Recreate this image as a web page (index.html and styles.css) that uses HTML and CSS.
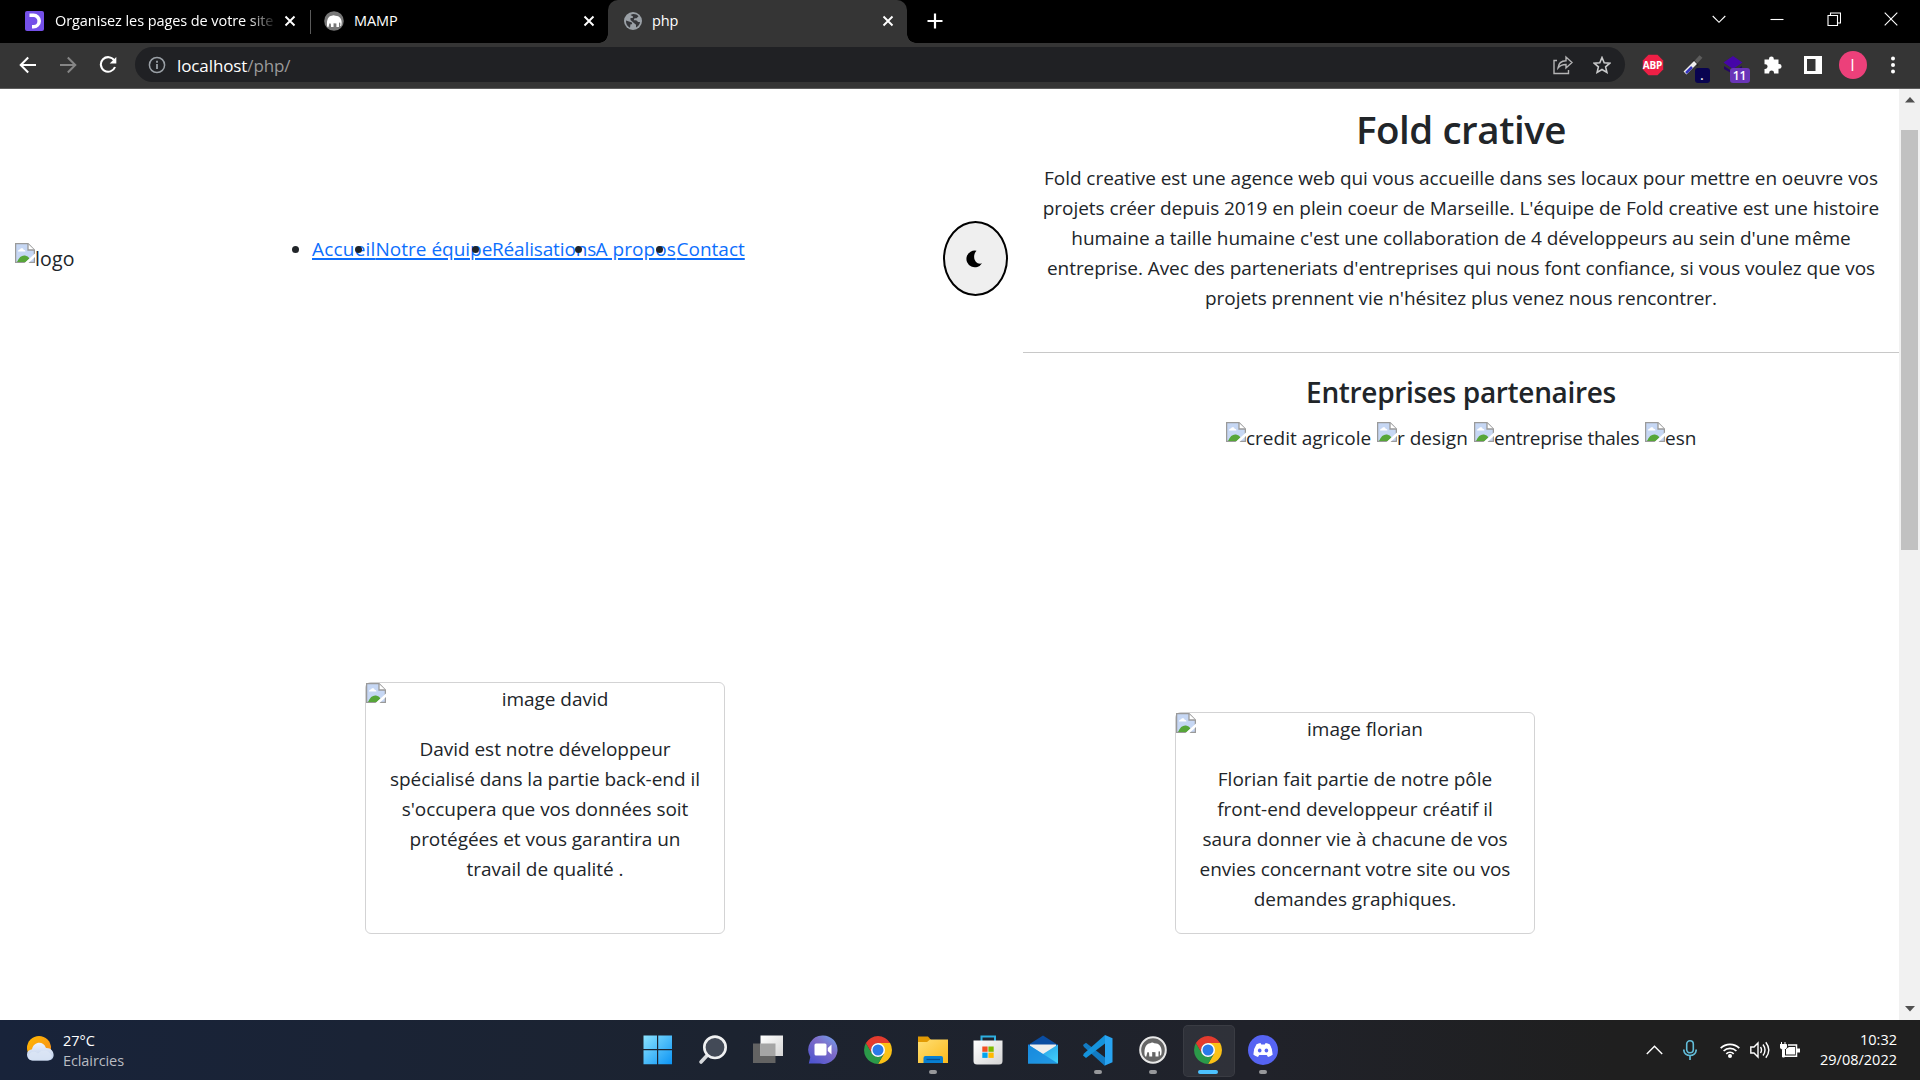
FILE: index.html
```html
<!DOCTYPE html>
<html lang="fr">
<head>
<meta charset="utf-8">
<title>php</title>
<link rel="stylesheet" href="styles.css">
</head>
<body>
<svg class="defs" width="0" height="0">
  <defs>
    <linearGradient id="win" x1="0" y1="0" x2="1" y2="1"><stop offset="0" stop-color="#8be3ff"/><stop offset="1" stop-color="#0c94f4"/></linearGradient>
    <linearGradient id="grey" x1="0" y1="0" x2="1" y2="1"><stop offset="0" stop-color="#fff"/><stop offset="1" stop-color="#d4d4d4"/></linearGradient>
    <linearGradient id="chatg" x1="1" y1="0" x2="0.2" y2="1"><stop offset="0" stop-color="#6ea6f0"/><stop offset=".45" stop-color="#7f6cc8"/><stop offset="1" stop-color="#4f55cf"/></linearGradient>
    <linearGradient id="fold" x1="0" y1="0" x2="1" y2="1"><stop offset="0" stop-color="#ffdf74"/><stop offset="1" stop-color="#fbba1c"/></linearGradient>
    <linearGradient id="mailg" x1="0" y1="0" x2="1" y2="1"><stop offset="0" stop-color="#1a8fe0"/><stop offset="1" stop-color="#45d3fb"/></linearGradient>
    <linearGradient id="sun" x1="0" y1="0" x2="1" y2="1"><stop offset="0" stop-color="#ffb900"/><stop offset="1" stop-color="#f78a1c"/></linearGradient>
    <linearGradient id="cloud" x1="0" y1="0" x2="0" y2="1"><stop offset="0" stop-color="#eef3fb"/><stop offset="1" stop-color="#b8cbea"/></linearGradient>
    <symbol id="broken" viewBox="0 0 20 20">
      <path d="M.6 .6H13L19.400 7V19.400H.6z" fill="#c6d7f4" stroke="#9a9a9a" stroke-width="1.300"/>
      <path d="M3 8.500c0-1.500 1.200-2 2-2 .5-1.700 3.200-1.700 3.600.2 1.300 0 1.800.8 1.800 1.800z" fill="#fff"/>
      <path d="M2 19c2-5 5-7 8-6.500 2 .3 3.500 1.500 4.500 3L11 19z" fill="#57a639"/>
      <path d="M13 1V7H19.400" fill="#fff" stroke="#9a9a9a" stroke-width="1.300"/>
      <path d="M20 10.500V14L13.500 20H9.500z" fill="#fff"/>
    </symbol>
    <symbol id="chrome" viewBox="0 0 28 28">
      <path d="M14 7H26.100A14 14 0 0 1 14 28L20.100 17.500z" fill="#fbc116"/>
      <path d="M1.900 7L8 17.500A7 7 0 0 0 20.100 17.500L14 28A14 14 0 0 1 1.900 7z" fill="#2b9a49"/>
      <path d="M1.900 7A14 14 0 0 1 26.100 7H14A7 7 0 0 0 8 17.500z" fill="#e33b2e"/>
      <circle cx="14" cy="14" r="7" fill="#fff"/><circle cx="14" cy="14" r="5.500" fill="#2a7ae9"/>
    </symbol>
    <symbol id="elephant" viewBox="0 0 18 16">
      <path d="M.5 12C.2 6 2 1.500 6.200 1.200c1-.8 3-.8 4 0C15 1 17.600 4.500 17.600 9c0 2-.2 3.500-.8 4.500l-1-.3c.4-1.600.3-3 0-4l-1.300.3V14.500h-3V10.200L8.200 10v4.500H5.300L5 10.500 3.600 10c-.8 1.500-.8 3.500-1.500 4.700C1 14.700.6 13.300.5 12z"/>
    </symbol>
    <symbol id="x" viewBox="0 0 12 12"><path d="M1.500 1.500l9 9M10.500 1.500l-9 9" fill="none" stroke="#fff" stroke-width="1.900"/></symbol>
  </defs>
</svg>

<header class="tabs">
  <div class="tab tab-first">
    <svg width="20" height="20" viewBox="0 0 20 20"><rect x="2" width="17" height="20" rx="2" fill="#7450e8"/><rect width="17" height="20" rx="2" fill="#7450e8"/><path d="M4.500 4.300H8.500a5.700 5.700 0 0 1 0 11.400H7" fill="none" stroke="#fff" stroke-width="3.600"/></svg>
    <span class="tab-title tab-fade">Organisez les pages de votre site</span>
    <svg class="close" width="12" height="12"><use href="#x"/></svg>
  </div>
  <div class="tab tab-mamp">
    <svg width="20" height="20" viewBox="0 0 20 20"><circle cx="10" cy="10" r="9.800" fill="#777"/><use href="#elephant" x="2.500" y="3.500" width="15.500" height="14" fill="#fff"/></svg>
    <span class="tab-title">MAMP</span>
    <svg class="close" width="12" height="12"><use href="#x"/></svg>
  </div>
  <div class="tab tab-active">
    <svg width="18" height="18" viewBox="0 0 18 18"><circle cx="9" cy="9" r="9" fill="#9aa0a6"/><path d="M2 8.500l4.500 1.500c1 0 2 .8 1.500 2.200H6.500L6 15.800C3.500 14.500 1.700 12 2 8.500zM6.500 3C9 1.300 12.500 2 14.500 4.200l-2 2H10.500l-.8 2h1.800c1.500 0 1.800.9 2.600 1.900H16c-.2 2.500-1.800 4.500-4 5.400v-2.800L9.300 10.500 6.500 8V6h1.500c.8 0 1-.5 1-1.500z" fill="#35363a"/></svg>
    <span class="tab-title">php</span>
    <svg class="close" width="12" height="12"><use href="#x"/></svg>
  </div>
  <svg class="plus" width="16" height="16" viewBox="0 0 16 16"><path d="M8 .5v15M.5 8h15" stroke="#fff" stroke-width="2.200"/></svg>
  <div class="window-controls">
    <svg width="14" height="14" viewBox="0 0 14 14"><path d="M.7 4L7 10.300 13.300 4"/></svg>
    <svg width="14" height="14" viewBox="0 0 14 14"><path d="M.5 7.500h13"/></svg>
    <svg width="14" height="14" viewBox="0 0 14 14"><path d="M1 3.500H10.500V13.500H1zM3.500 3V1H13.500V11H11"/></svg>
    <svg width="14" height="14" viewBox="0 0 14 14"><path d="M.7 .7l12.600 12.600M13.300 .7L.7 13.300"/></svg>
  </div>
</header>

<div class="toolbar">
  <div class="nav-buttons">
    <svg width="18" height="18" viewBox="0 0 18 18"><path d="M17 9H2M9.200 1.500L1.700 9l7.500 7.500" fill="none" stroke="#fff" stroke-width="2"/></svg>
    <svg width="18" height="18" viewBox="0 0 18 18"><path d="M1 9h15M8.800 1.500L16.300 9l-7.500 7.500" fill="none" stroke="#868686" stroke-width="2"/></svg>
    <svg width="18" height="18" viewBox="0 0 18 18"><path d="M15.300 4.500A7.300 7.300 0 1 0 16 11" fill="none" stroke="#fff" stroke-width="2.100"/><path d="M17.300 1V7.600H10.700z" fill="#fff"/></svg>
  </div>
  <div class="omnibox">
    <svg width="18" height="18" viewBox="0 0 18 18"><circle cx="9" cy="9" r="7.600" fill="none" stroke="#9aa0a6" stroke-width="1.500"/><path d="M9 8v5M9 4.800v1.900" stroke="#9aa0a6" stroke-width="1.800"/></svg>
    <span class="url">localhost<i>/php/</i></span>
    <svg class="share" width="20" height="20" viewBox="0 0 20 20"><path d="M4 5.500H1V18.500H15.500V15M5 13c.5-5 3.500-7.300 8-7.300V2L19 7.500 13 13V9.500C9.500 9.500 7 10.500 5 13z" fill="none" stroke="#b4b4b5" stroke-width="1.400"/></svg>
    <svg width="18" height="18" viewBox="0 0 18 18"><path d="M9 1.500l2.200 5.200 5.600.5-4.200 3.700 1.300 5.500L9 13.500l-4.900 2.900 1.300-5.500L1.200 7.200l5.600-.5z" fill="none" stroke="#c9cacb" stroke-width="1.600"/></svg>
  </div>
  <div class="extensions">
    <div><svg width="22" height="22" viewBox="0 0 22 22"><path d="M6.500 .8h9l5.700 5.700v9l-5.700 5.700h-9L.8 15.500v-9z" fill="#ee1f45"/></svg><b class="abp">ABP</b></div>
    <div><svg width="20" height="20" viewBox="0 0 20 20"><path d="M12 8L18 1.500" stroke="#5c5c5c" stroke-width="4"/><path d="M10 5.500l5 5" stroke="#222" stroke-width="2"/><path d="M2 18L12.500 7.500" stroke="#eee" stroke-width="4"/><path d="M3 18L9 12" stroke="#3434bd" stroke-width="2.500"/></svg><span class="badge badge-dot">.</span></div>
    <div><svg width="20" height="20" viewBox="0 0 20 20"><path d="M1 11l9 6 9-6v3l-9 5-9-5z" fill="#250467"/><path d="M10 1l9.500 6.500L10 14 .5 7.500z" fill="#4505a8"/></svg><span class="badge badge-count">11</span></div>
    <div><svg width="20" height="20" viewBox="0 0 20 20"><path d="M1.500 4.500H6V3.800a2.400 2.400 0 0 1 4.800 0v.7h4.700V9h.7a2.400 2.400 0 0 1 0 4.800h-.7v4.700H11v-.7a2.400 2.400 0 0 0-4.800 0v.7H1.500V14h.7a2.400 2.400 0 0 0 0-4.800h-.7z" fill="#fff"/></svg></div>
    <div><svg width="18" height="18" viewBox="0 0 18 18"><path d="M0 0h18v18H0zM3 3v12h8.500V3z" fill="#fff" fill-rule="evenodd"/></svg></div>
    <div><span class="avatar">I</span></div>
    <div><svg width="4" height="18" viewBox="0 0 4 18"><circle cx="2" cy="2.500" r="2" fill="#fff"/><circle cx="2" cy="9" r="2" fill="#fff"/><circle cx="2" cy="15.500" r="2" fill="#fff"/></svg></div>
  </div>
</div>

<div class="viewport">
  <div class="page">
    <div class="top">
      <div class="left">
        <div class="logo"><svg width="20" height="20"><use href="#broken"/></svg><span>logo</span></div>
        <ul class="menu">
          <li><a>Accueil</a></li><li><a>Notre équipe</a></li><li><a>Réalisations</a></li><li><a>A propos</a></li><li><a>Contact</a></li>
        </ul>
        <div class="moon"><svg width="18" height="18" viewBox="0 0 18 18"><path d="M11.500 .7A8.400 8.400 0 1 0 17 13.300C11 15.500 6 7 11.500 .7z"/></svg></div>
      </div>
      <div class="right">
        <h1>Fold crative</h1>
        <p class="intro">
          <span>Fold creative est une agence web qui vous accueille dans ses locaux pour mettre en oeuvre vos</span>
          <span>projets créer depuis 2019 en plein coeur de Marseille. L'équipe de Fold creative est une histoire</span>
          <span>humaine a taille humaine c'est une collaboration de 4 développeurs au sein d'une même</span>
          <span>entreprise. Avec des parteneriats d'entreprises qui nous font confiance, si vous voulez que vos</span>
          <span>projets prennent vie n'hésitez plus venez nous rencontrer.</span>
        </p>
        <h2>Entreprises partenaires</h2>
        <div class="partners">
          <div class="p1"><svg width="20" height="20"><use href="#broken"/></svg><span>credit agricole</span></div>
          <div class="p2"><svg width="20" height="20"><use href="#broken"/></svg><span>r design</span></div>
          <div class="p3"><svg width="20" height="20"><use href="#broken"/></svg><span>entreprise thales</span></div>
          <div class="p4"><svg width="20" height="20"><use href="#broken"/></svg><span>esn</span></div>
        </div>
      </div>
    </div>
    <div class="team">
      <article class="card card-david">
        <div class="alt"><svg width="20" height="20"><use href="#broken"/></svg><span>image david</span></div>
        <p><span>David est notre développeur</span><span>spécialisé dans la partie back-end il</span><span>s'occupera que vos données soit</span><span>protégées et vous garantira un</span><span>travail de qualité .</span></p>
      </article>
      <article class="card card-florian">
        <div class="alt"><svg width="20" height="20"><use href="#broken"/></svg><span>image florian</span></div>
        <p><span>Florian fait partie de notre pôle</span><span>front-end developpeur créatif il</span><span>saura donner vie à chacune de vos</span><span>envies concernant votre site ou vos</span><span>demandes graphiques.</span></p>
      </article>
    </div>
  </div>
  <div class="scrollbar">
    <svg width="10" height="6" viewBox="0 0 10 6"><path d="M5 0l5 5.500H0z" fill="#505050"/></svg>
    <div class="thumb"></div>
    <svg class="down" width="10" height="6" viewBox="0 0 10 6"><path d="M5 5.500L0 0h10z" fill="#505050"/></svg>
  </div>
</div>

<footer class="taskbar">
  <div class="weather">
    <svg width="28" height="25" viewBox="0 0 28 25"><circle cx="13" cy="12" r="12" fill="url(#sun)"/><path d="M6.500 24.500a6 5.700 0 0 1-.5-11.300C7.500 6 17 4 20 12c9-.5 10.500 12.500 2 12.500z" fill="url(#cloud)"/><path d="M2 21c1-5.500 7-6.500 10-3.500 4-4.500 11-4 14 2.500-.7 3-2.500 4.500-5 4.500H7c-2.500 0-4.500-1-5-3.500z" fill="#dce6f5" opacity=".8"/></svg>
    <div><span>27°C</span><span class="dim">Eclaircies</span></div>
  </div>
  <div class="apps">
    <div><svg width="30" height="30" viewBox="0 0 30 30"><path d="M.5 .5H14V14H.5zM15.200 .5H29V14H15.200zM.5 15.200H14V29.300H.5zM15.200 15.200H29V29.300H15.200z" fill="url(#win)"/></svg></div>
    <div><svg width="30" height="30" viewBox="0 0 30 30"><path d="M9.500 20L3 27" stroke="#d6d9dc" stroke-width="3.600" stroke-linecap="round"/><circle cx="17" cy="12.300" r="10.700" fill="#434a57" stroke="#f0f1f2" stroke-width="2.600"/></svg></div>
    <div><svg width="30" height="30" viewBox="0 0 30 30"><path d="M0 8.500H22.500V28H0z" fill="#636363"/><path d="M7.500 .5H30V21H7.500z" fill="url(#grey)"/><path d="M7.500 8.500h15V21h-15z" fill="#a5a5a5"/></svg></div>
    <div><svg width="30" height="30" viewBox="0 0 30 30"><path d="M15 .5a14.200 14.200 0 1 1-3 28H.8l1.500-6.500A14.200 14.200 0 0 1 15 .5z" fill="url(#chatg)"/><rect x="6.500" y="8.500" width="12" height="12" rx="1.500" fill="#fff"/><path d="M19.800 13l3.700-3.500v10l-3.700-3.500z" fill="#fff"/></svg></div>
    <div><svg width="28" height="28"><use href="#chrome"/></svg></div>
    <div class="running"><svg width="30" height="30" viewBox="0 0 30 30"><path d="M0 1.500h10L13 5v5H0z" fill="#e29a04"/><path d="M0 7h9l3-2.500H30V28H0z" fill="url(#fold)"/><path d="M5.500 28V23q0-2 2-2h15.500q2 0 2 2V28z" fill="#087fd2"/><path d="M8.500 24.500h13.500" stroke="#064f92" stroke-width="1.300"/></svg></div>
    <div><svg width="30" height="30" viewBox="0 0 30 30"><path d="M8.500 6V1.500H22V6" fill="none" stroke="#2eafe0" stroke-width="2"/><path d="M.5 5.500h29V26q0 3.500-3.500 3.500H4Q.5 29.500.5 26z" fill="url(#grey)"/><path d="M9.300 11.500h5.300v5.300H9.300z" fill="#f25022"/><path d="M15.400 11.500h5.300v5.300h-5.300z" fill="#7fba00"/><path d="M15.400 17.600h5.300v5.300h-5.300z" fill="#ffb900"/><path d="M9.300 17.600h5.300v5.300H9.300z" fill="#00a4ef"/></svg></div>
    <div><svg width="30" height="30" viewBox="0 0 30 30"><path d="M0 10L15 .5 30 10v8H0z" fill="#0a4da2"/><path d="M2 9.500h26v8L15 22 2 17.500z" fill="#eee"/><path d="M0 9.500L15 19l15-9.500v19H0z" fill="url(#mailg)"/><path d="M0 9.500L30 28.500H0z" fill="#1787dc" opacity=".75"/></svg></div>
    <div class="running"><svg width="30" height="31" viewBox="0 0 30 31"><path d="M0 10l3-2.300L22 22.500V31L1 12z" fill="#127bc3"/><path d="M0 20.500l3 2.500L22 8.500V0L1 18.500z" fill="#1593dc"/><path d="M22 0l7.500 3.300v24L22 30.500V0z" fill="#28a4f2"/></svg></div>
    <div class="running"><svg width="28" height="28" viewBox="0 0 28 28"><circle cx="14" cy="14" r="12.800" fill="#666" stroke="#e9e9e9" stroke-width="2"/><use href="#elephant" x="5" y="6" width="18" height="16" fill="#fff"/></svg></div>
    <div class="running current"><svg width="28" height="28"><use href="#chrome"/></svg></div>
    <div class="running"><svg width="30" height="30" viewBox="0 0 30 30"><circle cx="15" cy="15" r="15" fill="#5664f2"/><path d="M8.500 9.200q2-.9 4-1.200l.8 1.500h3.500l.8-1.500q2 .3 4 1.200 3.200 5 3 10.600-2 1.500-4.600 2.200l-1.200-2h-7.600l-1.200 2Q7.500 21.300 5.500 19.800q-.3-5.800 3-10.600z" fill="#fff"/><ellipse cx="11.700" cy="15.500" rx="1.800" ry="2" fill="#5664f2"/><ellipse cx="18.400" cy="15.500" rx="1.800" ry="2" fill="#5664f2"/></svg></div>
  </div>
  <div class="tray">
    <svg class="chev" width="17" height="10" viewBox="0 0 17 10"><path d="M.8 9L8.500 1.200 16.200 9" fill="none" stroke="#fff" stroke-width="1.400"/></svg>
    <svg class="mic" width="14" height="20" viewBox="0 0 14 20"><rect x="3.700" y=".8" width="6.600" height="12" rx="3.300" fill="none" stroke="#62bcd8" stroke-width="1.600"/><path d="M.8 9.500c0 8 12.400 8 12.400 0M7 15.500V20" fill="none" stroke="#62bcd8" stroke-width="1.700"/></svg>
    <svg class="wifi" width="20" height="16" viewBox="0 0 20 16"><path d="M.7 6.200a13 13 0 0 1 18.600 0M3.600 9a9 9 0 0 1 12.800 0M6.300 11.800a5.200 5.200 0 0 1 7.400 0" fill="none" stroke="#fff" stroke-width="1.700"/><circle cx="10" cy="14" r="2" fill="#fff"/></svg>
    <svg class="sound" width="20" height="18" viewBox="0 0 20 18"><path d="M.8 6H4L8 2v14L4 12H.8zM10.500 6q2 3 0 6M13 3.500q4 5.500 0 11M15.800 1.200q6 7.800 0 15.600" fill="none" stroke="#fff" stroke-width="1.400"/></svg>
    <svg class="battery" width="20" height="18" viewBox="0 0 20 18"><path d="M1.500 1v3M5 1v3M0 3.500h6.500v3L4.500 8.500V16H2.500V8.500L0 6.500z" fill="#fff" stroke="#fff"/><path d="M8 4h8.500v11.300H4.500" fill="none" stroke="#fff" stroke-width="1.500"/><path d="M6 8l3-2h6v7.500H6zM17 7.500h3v4h-3z" fill="#fff"/></svg>
    <div class="clock"><span>10:32</span><span>29/08/2022</span></div>
  </div>
</footer>
</body>
</html>
```
FILE: styles.css
```css
* { box-sizing: border-box; }
body {
  margin: 0; width: 1920px; height: 1080px; overflow: hidden;
  display: grid; grid-template-rows: 43px 46px 931px 60px;
  font-family: "Open Sans", "Noto Sans", sans-serif; color: #212529; background: #fff;
}
svg { display: block; flex: none; }
.defs { position: absolute; }

/* Tab strip */
.tabs { background: #000; display: flex; align-items: flex-start; }
.tab { height: 43px; display: flex; align-items: center; color: #fff; font-size: 14.500px; padding-bottom: 1px; letter-spacing: -.08px; }
.tab-title { white-space: nowrap; margin-left: 10px; margin-top: -1px; }
.tab .close { margin-left: auto; }
.tab-first { width: 310px; padding-left: 25px; padding-right: 14px; }
.tab-fade { width: 218px; overflow: hidden; -webkit-mask-image: linear-gradient(90deg, #000 88%, transparent 102%); mask-image: linear-gradient(90deg, #000 88%, transparent 102%); }
.tab-mamp { width: 298px; padding-left: 14px; padding-right: 13px; background: linear-gradient(#5a5a5a, #5a5a5a) 0 10px / 1px 24px no-repeat; }
.tab-active { width: 299px; padding-left: 16px; padding-right: 13px; background: #353535; border-radius: 10px 10px 0 0; position: relative; }
.tab-active .tab-title { margin-left: 10px; }
.tab-active::before, .tab-active::after { content: ""; position: absolute; bottom: 0; width: 9px; height: 9px; }
.tab-active::before { left: -9px; background: radial-gradient(circle at 0 0, transparent 8.500px, #353535 9px); }
.tab-active::after { right: -9px; background: radial-gradient(circle at 100% 0, transparent 8.500px, #353535 9px); }
.plus { margin: 13px 0 0 20px; }
.window-controls { margin-left: auto; width: 229.500px; height: 37px; display: grid; grid-template-columns: repeat(4, 1fr); place-items: center; }
.window-controls path { fill: none; stroke: #fff; stroke-width: 1.100; }

/* Address bar */
.toolbar { background: #353535; border-bottom: 1px solid #5d5d5d; display: flex; align-items: center; padding: 0 7px 1px 8px; }
.nav-buttons { width: 127px; padding-right: 7px; display: grid; grid-template-columns: repeat(3, 1fr); justify-items: center; }
.omnibox { width: 1490px; height: 35px; border-radius: 18px; background: #202124; display: flex; align-items: center; padding: 0 14px 0 13px; margin-top: -1px; }
.url { color: #fff; font-size: 17px; margin: 1px 0 0 11px; letter-spacing: -.1px; }
.url i { font-style: normal; color: #9a9a9b; }
.share { margin: 0 20px 0 auto; }
.extensions { margin-left: 7.500px; display: grid; grid-template-columns: repeat(7, 40px); height: 35px; }
.extensions > div { position: relative; display: grid; place-items: center; }
.abp { position: absolute; color: #fff; font: 700 10px/12px "Open Sans", sans-serif; letter-spacing: -.2px; }
.badge { position: absolute; top: 20px; height: 15px; border-radius: 3px; color: #fff; font-size: 12px; line-height: 15px; font-weight: 600; text-align: center; }
.badge-dot { left: 22px; width: 15px; background: #090450; }
.badge-count { left: 17px; width: 20px; background: #6a35b8; }
.avatar { width: 28px; height: 28px; border-radius: 50%; background: #ec407a; color: #fff; font-size: 16px; line-height: 28px; text-align: center; }

/* Web page */
.viewport { display: grid; grid-template-columns: 1899px 21px; }
.page { font-size: 19px; line-height: 30px; }
.page span, .page a { white-space: nowrap; }
.top { height: 563px; display: flex; }
.left { width: 1023px; height: 338px; display: flex; align-items: center; padding: 0 15px; }
.logo { width: 240px; display: flex; }
.logo span { margin-top: 1px; font-size: 19.500px; letter-spacing: .2px; }
.menu { list-style: none; display: flex; margin: 0; padding: 0 0 0 57px; position: relative; top: -9px; }
.menu li { position: relative; }
.menu li:nth-child(1) { width: 63.500px; letter-spacing: .2px; }
.menu li:nth-child(2) { width: 116.500px; }
.menu li:nth-child(3) { width: 103.500px; letter-spacing: -.15px; }
.menu li:nth-child(4) { width: 81px; letter-spacing: .05px; }
.menu li::before { content: ""; position: absolute; left: -20.500px; top: 12px; width: 7px; height: 7px; border-radius: 50%; background: #212529; }
.menu a { display: block; color: #0d6efd; text-decoration: underline; text-decoration-thickness: 2px; text-underline-offset: 2px; }
.moon { margin-left: auto; width: 65px; height: 75px; border: 2px solid #000; border-radius: 50%; background: #efefef; display: grid; place-items: center; }
.moon svg { margin-right: 3px; margin-top: 1px; }
.right { width: 876px; text-align: center; }
h1 { margin: 16px 0 10px; font-size: 38.500px; line-height: 48px; font-weight: 600; letter-spacing: -.45px; }
.intro { margin: 0; height: 190px; border-bottom: 1px solid #c8c8c8; letter-spacing: -.05px; }
.intro span, .card p span { display: block; }
h2 { margin: 21px 0 10px; font-size: 28px; line-height: 36px; font-weight: 600; letter-spacing: -.33px; }
.partners { display: flex; padding-left: 203px; }
.partners > div { display: flex; }
.partners span { margin-top: 3px; }
.p1 { width: 151px; } .p2 { width: 97px; } .p3 { width: 171px; letter-spacing: -.27px; }
.partners svg { margin-top: 2px; }
.team { display: flex; align-items: flex-end; height: 282px; padding-left: 365px; gap: 450px; }
.card { width: 360px; border: 1px solid #d3d3d4; border-radius: 6px; text-align: center; letter-spacing: -.03px; }
.card-david { height: 252px; }
.card-florian { height: 222px; }
.alt { display: flex; height: 31px; }
.alt span { flex: 1; margin-top: 1px; }
.card p { margin: 20px 0 0; }
.scrollbar { background: #f1f1f1; display: flex; flex-direction: column; align-items: center; padding: 8px 0; }
.thumb { width: 17px; height: 420px; margin-top: 27px; background: #c1c1c1; }
.down { margin-top: auto; }

/* Taskbar */
.taskbar { background: linear-gradient(90deg, #18233a 0, #1c2330 38%, #20222a 65%, #1f1f1f 84%); display: grid; grid-template-columns: 630px 660px 1fr; color: #fff; font-size: 14.500px; line-height: 20px; }
.weather { display: flex; align-items: center; padding: 0 0 0 26px; gap: 9px; }
.weather svg { margin-top: -3px; }
.weather span, .clock span { display: block; }
.weather div { padding-top: 1px; }
.dim { color: #b9bcc2; letter-spacing: -.1px; }
.apps { display: grid; grid-template-columns: repeat(12, 55px); }
.apps > div { display: grid; place-items: center; position: relative; }
.running::after { content: ""; position: absolute; left: 23.500px; top: 50px; width: 8px; height: 4px; border-radius: 2px; background: #97989b; }
.current::before { content: ""; position: absolute; left: 3px; top: 5px; width: 50px; height: 50px; border-radius: 5px; background: rgba(255,255,255,.07); border: 1px solid rgba(255,255,255,.05); }
.current svg { position: relative; }
.current::after { left: 18px; width: 20px; background: #4cc2ff; }
.tray { display: flex; align-items: center; padding-right: 23px; }
.chev { margin-left: 356px; }
.mic { margin-left: 20px; }
.wifi { margin-left: 23px; }
.sound { margin-left: 10px; }
.battery { margin-left: 10px; }
.clock { margin-left: auto; text-align: right; }
```
